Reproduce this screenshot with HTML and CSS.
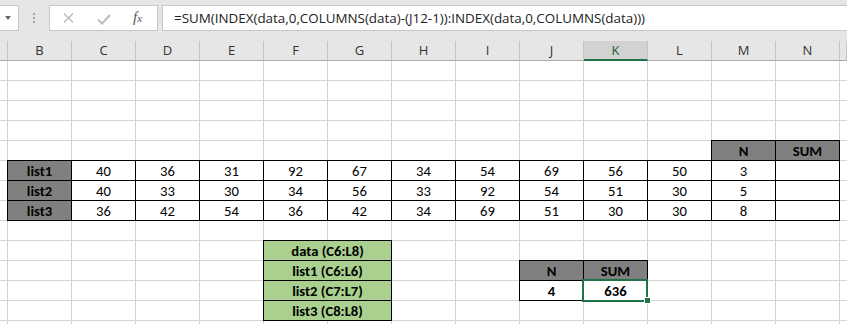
FILE: index.html
```html
<!DOCTYPE html>
<html lang="en">
<head>
    <meta charset="UTF-8">
    <title>Sum last N columns</title>
    <link rel="stylesheet" href="styles.css">
</head>
<body>
    <div class="toolbar">
        <div class="namebox"><span class="caret"></span></div>
        <div class="grip"><i></i><i></i><i></i></div>
        <div class="fxbox">
            <svg class="icon-x" width="11" height="10" viewBox="0 0 11 10">
                <path d="M1 0.5 L10 9.5 M10 0.5 L1 9.5" stroke="#b8b8b8" stroke-width="1.3" fill="none"/>
            </svg>
            <svg class="icon-check" width="14" height="11" viewBox="0 0 14 11">
                <path d="M1 5.5 L5 9.5 L13 1" stroke="#bdbdbd" stroke-width="2" fill="none"/>
            </svg>
            <span class="fx">f<small>x</small></span>
        </div>
        <div class="formula">=SUM(INDEX(data,0,COLUMNS(data)-(J12-1)):INDEX(data,0,COLUMNS(data)))</div>
    </div>

    <div class="sheet">
        <div class="colhead"></div>
        <div class="colhead">B</div>
        <div class="colhead">C</div>
        <div class="colhead">D</div>
        <div class="colhead">E</div>
        <div class="colhead">F</div>
        <div class="colhead">G</div>
        <div class="colhead">H</div>
        <div class="colhead">I</div>
        <div class="colhead">J</div>
        <div class="colhead active">K</div>
        <div class="colhead">L</div>
        <div class="colhead">M</div>
        <div class="colhead">N</div>
        <div class="colhead"></div>

        <!-- data table B5:N8 -->
        <div class="block main">
            <div class="skip"></div>
            <div class="b dark">N</div>
            <div class="b dark">SUM</div>

            <div class="b dark">list1</div>
            <div class="b">40</div><div class="b">36</div><div class="b">31</div><div class="b">92</div><div class="b">67</div>
            <div class="b">34</div><div class="b">54</div><div class="b">69</div><div class="b">56</div><div class="b">50</div>
            <div class="b">3</div><div class="b"></div>

            <div class="b dark">list2</div>
            <div class="b">40</div><div class="b">33</div><div class="b">30</div><div class="b">34</div><div class="b">56</div>
            <div class="b">33</div><div class="b">92</div><div class="b">54</div><div class="b">51</div><div class="b">30</div>
            <div class="b">5</div><div class="b"></div>

            <div class="b dark">list3</div>
            <div class="b">36</div><div class="b">42</div><div class="b">54</div><div class="b">36</div><div class="b">42</div>
            <div class="b">34</div><div class="b">69</div><div class="b">51</div><div class="b">30</div><div class="b">30</div>
            <div class="b">8</div><div class="b"></div>
        </div>

        <!-- named ranges F10:G13 -->
        <div class="block names">
            <div class="b green">data (C6:L8)</div>
            <div class="b green">list1 (C6:L6)</div>
            <div class="b green">list2 (C7:L7)</div>
            <div class="b green">list3 (C8:L8)</div>
        </div>

        <!-- result J11:K12 -->
        <div class="block result">
            <div class="b dark">N</div>
            <div class="b dark">SUM</div>
            <div class="b strong">4</div>
            <div class="b strong selected">636</div>
        </div>
    </div>
</body>
</html>
```

FILE: styles.css
```css
body {
    margin: 0;
    background-color: #fff;
    overflow: hidden;
    font-family: "Carlito", "Liberation Sans", Arial, sans-serif;
    font-size: 14.67px;
    color: #000;
}

/* formula bar */
.toolbar {
    display: flex;
    align-items: flex-start;
    height: 41px;
    padding-top: 5px;
    box-sizing: border-box;
    background-color: #e6e6e6;
}
.namebox {
    width: 19px;
    height: 26px;
    box-sizing: border-box;
    background-color: #fff;
    border: 1px solid #c6c6c6;
    border-left: none;
    display: flex;
    align-items: center;
    justify-content: center;
}
.caret {
    width: 0;
    height: 0;
    border-left: 3.5px solid transparent;
    border-right: 3.5px solid transparent;
    border-top: 4px solid #666;
    margin-left: -2px;
}
.grip {
    display: flex;
    flex-direction: column;
    gap: 2px;
    margin-left: 14px;
    padding-top: 8px;
}
.grip i {
    display: block;
    width: 2px;
    height: 2px;
    background-color: #a6a6a6;
}
.fxbox {
    position: relative;
    width: 109px;
    height: 26px;
    box-sizing: border-box;
    margin-left: 14px;
    background-color: #fff;
    border: 1px solid #c6c6c6;
    display: flex;
    align-items: center;
}
.icon-x {
    margin-left: 13px;
}
.icon-check {
    margin-left: 23px;
    margin-top: 3px;
}
.fx {
    margin-left: 22px;
    margin-top: -2px;
    font-family: "Liberation Serif", serif;
    font-style: italic;
    font-size: 15px;
    color: #555;
}
.fx small {
    font-size: 11px;
}
.formula {
    flex: 1;
    height: 26px;
    box-sizing: border-box;
    margin-left: 4px;
    margin-right: -2px;
    padding-left: 11px;
    background-color: #fff;
    border: 1px solid #c6c6c6;
    font-family: "Open Sans", sans-serif;
    font-size: 13.4px;
    line-height: 24px;
    color: #222;
    white-space: nowrap;
}

/* worksheet */
.sheet {
    display: grid;
    grid-template-columns: 8px repeat(13, 64px) 1fr;
    grid-template-rows: repeat(15, 20px);
    background-image:
        linear-gradient(to right, transparent 63px, #d4d4d4 63px),
        linear-gradient(to bottom, transparent 19px, #d4d4d4 19px);
    background-size: 64px 20px;
    background-position: 8px 0;
}
.colhead {
    box-sizing: border-box;
    background-color: #e6e6e6;
    border-right: 1px solid #c4c4c4;
    border-bottom: 1px solid #ababab;
    font-family: "Open Sans", sans-serif;
    font-size: 13px;
    line-height: 19px;
    text-align: center;
    color: #333;
}
.colhead.active {
    background-color: #d2d2d2;
    border-bottom: 2px solid #217346;
    line-height: 18px;
    color: #1d5e39;
}

.block {
    display: grid;
    grid-auto-rows: 20px;
}
.main {
    grid-column: 2 / 15;
    grid-row: 6 / 10;
    grid-template-columns: repeat(13, 64px);
}
.main .skip {
    grid-column: span 11;
}
.names {
    grid-column: 6 / 8;
    grid-row: 11 / 15;
}
.result {
    grid-column: 10 / 12;
    grid-row: 12 / 14;
    grid-template-columns: repeat(2, 64px);
}

/* bordered cell: the box grows over the gridline on its left and top */
.b {
    margin: -1px 0 0 -1px;
    border: 1px solid #000;
    padding-top: 2px;
    line-height: 17px;
    text-align: center;
    white-space: nowrap;
    background-color: #fff;
}
.dark {
    background-color: #808080;
    font-weight: bold;
}
.green {
    background-color: #a9d08e;
    font-weight: bold;
}
.strong {
    font-weight: bold;
}
.selected {
    position: relative;
}
.selected::after {
    content: "";
    position: absolute;
    top: -2px;
    left: -2px;
    right: -1px;
    bottom: -2px;
    border: 2px solid #217346;
}
.selected::before {
    content: "";
    position: absolute;
    right: -3px;
    bottom: -3px;
    width: 5px;
    height: 5px;
    background-color: #217346;
    box-shadow: 0 0 0 1px #fff;
    z-index: 1;
}
```
